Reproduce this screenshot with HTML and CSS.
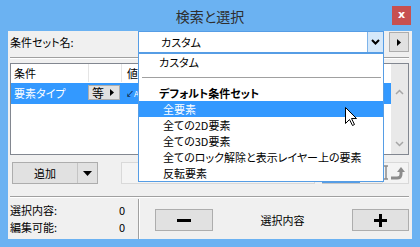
FILE: index.html
```html
<!DOCTYPE html>
<html>
<head>
<meta charset="utf-8">
<link rel="stylesheet" href="styles.css">
</head>
<body>

<!-- title bar -->
<div class="titlebar">
  <span></span>
  <div class="title">検索と選択</div>
  <div class="close">x</div>
</div>

<div class="client">

  <!-- condition set row -->
  <div class="setrow">
    <div class="setlabel">条件セット名:</div>
    <div class="combo">
      <div class="combotext">カスタム</div>
      <div class="combobtn">
        <svg width="9" height="6" viewBox="0 0 9 6"><path d="M1 1l3.5 3.5L8 1" stroke="#000" stroke-width="2" fill="none"/></svg>
      </div>
    </div>
    <div class="smallbtn">
      <svg width="4" height="7" viewBox="0 0 4 7"><path d="M0 0l4 3.5L0 7z" fill="#000"/></svg>
    </div>
  </div>

  <div class="sep"></div>

  <!-- condition list -->
  <div class="listbox">
    <div class="lbmain">
      <div class="lbhead">
        <span class="c1">条件</span>
        <span class="c2"></span>
        <span class="c3">値</span>
      </div>
      <div class="lbrow">
        <span class="c1">要素タイプ</span>
        <span class="c2"><span class="opbtn">等<svg width="4" height="7" viewBox="0 0 4 7"><path d="M0 0l4 3.5L0 7z" fill="#000"/></svg></span></span>
        <span class="c3"><span class="tiny">↙</span><span class="tinya">A</span></span>
      </div>
    </div>
    <div class="vscroll">
      <svg width="9" height="6" viewBox="0 0 9 6"><path d="M1 5l3.5-3.5L8 5" stroke="#a6a6a6" stroke-width="1.5" fill="none"/></svg>
      <svg width="9" height="6" viewBox="0 0 9 6"><path d="M1 1l3.5 3.5L8 1" stroke="#a6a6a6" stroke-width="1.5" fill="none"/></svg>
    </div>
  </div>

  <!-- buttons under the list -->
  <div class="btnrow">
    <div class="addbtn">
      <div class="addlabel">追加</div>
      <div class="addarrow"><svg width="9" height="5" viewBox="0 0 9 5"><path d="M0 0h9L4.5 5z" fill="#000"/></svg></div>
    </div>
    <div class="disbtn"></div>
    <div class="focusbtn"><div class="focusfill"></div></div>
    <div class="redobtn">
      <svg width="24" height="18" viewBox="0 0 24 18">
        <path d="M0 2h4M2 2v13M0 15h4" stroke="#8c8c8c" stroke-width="1.5" fill="none"/>
        <path d="M7 14h6q4 0 4-4v-2" stroke="#8c8c8c" stroke-width="3" fill="none"/>
        <path d="M13 8l4-5 4 5z" fill="#8c8c8c"/>
      </svg>
    </div>
  </div>

  <div class="sep sep2"></div>

  <!-- selection summary -->
  <div class="bottom">
    <div class="stats">
      <div class="statrow"><span>選択内容:</span><span>0</span></div>
      <div class="statrow"><span>編集可能:</span><span>0</span></div>
    </div>
    <div class="vsep"></div>
    <div class="selarea">
      <div class="selbtn minus"><span class="bar"></span></div>
      <div class="sellabel">選択内容</div>
      <div class="selbtn plus">
        <svg width="13" height="13" viewBox="0 0 13 13"><path d="M0 6.5h13M6.5 0v13" stroke="#000" stroke-width="3"/></svg>
      </div>
    </div>
  </div>

  <!-- open dropdown of the combo box -->
  <div class="popup">
    <div class="pitem">カスタム</div>
    <div class="psep"><span></span></div>
    <div class="pitem phead">デフォルト条件セット</div>
    <div class="pitem sub hot">全要素</div>
    <div class="pitem sub">全ての2D要素</div>
    <div class="pitem sub">全ての3D要素</div>
    <div class="pitem sub">全てのロック解除と表示レイヤー上の要素</div>
    <div class="pitem sub">反転要素</div>
  </div>
</div>

<!-- mouse pointer -->
<svg class="cursor" width="13" height="20" viewBox="0 0 13 20">
  <path d="M0.5 0.5V16.5L4.5 12.5L7.5 18.5L9.5 17.5L6.5 11.5H11.5Z" fill="#fff" stroke="#000" stroke-width="1"/>
</svg>

</body>
</html>
```

FILE: styles.css
```css
body {
  margin: 0;
  width: 420px;
  height: 247px;
  overflow: hidden;
  background: #6bb2f2;
  font-family: "Noto Sans CJK JP", "Noto Sans", sans-serif;
  font-size: 11px;
  font-feature-settings: "palt";
  color: #000;
}

/* title bar */
.titlebar {
  height: 31px;
  display: grid;
  grid-template-columns: 1fr auto 1fr;
  align-items: start;
}

.title {
  font-size: 14px;
  line-height: 33px;
  color: #2e2e2e;
}

.close {
  justify-self: end;
  margin: 6px 9px 0 0;
  width: 19px;
  height: 19px;
  background: #c75050;
  color: #fff;
  font: bold 11px "DejaVu Sans", sans-serif;
  text-align: center;
  line-height: 18px;
}

/* window body */
.client {
  position: relative;
  margin: 0 8px;
  height: 208px;
  padding: 0 3px 0 2px;
  background: #f0f0f0;
}

.setrow {
  display: flex;
  height: 22px;
}

.setlabel {
  width: 128px;
  line-height: 22px;
}

.combo {
  width: 246px;
  height: 22px;
  box-sizing: border-box;
  border: 1px solid #569de5;
  background: #fff;
  display: flex;
}

.combotext {
  flex: 1;
  padding-left: 22px;
  line-height: 20px;
}

.combobtn {
  width: 15px;
  border-left: 1px solid #7eb4ea;
  background: #d5e8fa;
  display: flex;
  align-items: center;
  justify-content: center;
}

.smallbtn {
  margin: 1px 0 0 5px;
  width: 20px;
  height: 20px;
  box-sizing: border-box;
  border: 1px solid #adadad;
  background: #e1e1e1;
  display: flex;
  align-items: center;
  justify-content: center;
}

.sep {
  margin-top: 4px;
  border-top: 1px solid #a0a0a0;
  border-bottom: 1px solid #fff;
}

/* list of conditions */
.listbox {
  margin-top: 4px;
  height: 92px;
  box-sizing: border-box;
  border: 1px solid #828790;
  background: #fff;
  display: flex;
}

.lbmain {
  flex: 1;
}

.lbhead, .lbrow {
  display: grid;
  grid-template-columns: 77px 34px 1fr;
}

.lbhead {
  height: 18px;
  line-height: 18px;
  border-bottom: 1px solid #fff;
}

.lbhead .c2 {
  border-left: 1px solid #e5e5e5;
  border-right: 1px solid #e5e5e5;
}

.c1 {
  padding-left: 3px;
}

.lbhead .c3 {
  padding-left: 5px;
}

.lbrow {
  height: 21px;
  line-height: 21px;
  background: #3399ff;
  color: #fff;
}

.opbtn {
  margin-top: 2px;
  width: 32px;
  height: 15px;
  box-sizing: border-box;
  border: 1px solid #adadad;
  background: #e1e1e1;
  color: #000;
  display: flex;
  align-items: center;
  gap: 6px;
  padding-left: 3px;
  font-size: 12px;
  line-height: 13px;
}

.lbrow .c3 {
  padding-left: 4px;
  font-size: 8px;
}

.tiny {
  color: #000;
}

.tinya {
  color: #fff;
}

.vscroll {
  width: 17px;
  background: #e9e9e9;
  display: flex;
  flex-direction: column;
  align-items: center;
  justify-content: space-between;
  padding: 25px 0 7px;
  box-sizing: border-box;
}

/* buttons below the list */
.btnrow {
  display: flex;
  margin-top: 7px;
  height: 22px;
}

.addbtn {
  margin-left: 2px;
  width: 86px;
  box-sizing: border-box;
  border: 1px solid #adadad;
  background: #e1e1e1;
  display: flex;
}

.addlabel {
  width: 64px;
  text-align: center;
  line-height: 20px;
  border-right: 1px solid #c4c4c4;
}

.addarrow {
  flex: 1;
  display: flex;
  align-items: center;
  justify-content: center;
}

.disbtn {
  margin-left: 23px;
  width: 194px;
  box-sizing: border-box;
  border: 1px solid #d9d9d9;
  background: #f4f4f4;
}

.focusbtn {
  margin-left: 7px;
  width: 60px;
  box-sizing: border-box;
  border-bottom: 1px solid #c8c8c8;
}

.focusfill {
  width: 38px;
  height: 100%;
  background: #569de5;
}

.redobtn {
  width: 27px;
  box-sizing: border-box;
  border: 1px solid #d9d9d9;
  background: #f4f4f4;
  display: flex;
  align-items: center;
  padding-left: 1px;
}

.sep2 {
  margin-top: 12px;
}

/* selection summary */
.bottom {
  display: flex;
  height: 41px;
}

.stats {
  width: 128px;
  padding-top: 4px;
}

.statrow {
  display: flex;
  justify-content: space-between;
  height: 17px;
  line-height: 17px;
  padding-right: 13px;
}

.vsep {
  margin-top: 1px;
  border-left: 1px solid #a0a0a0;
  border-right: 1px solid #fff;
}

.selarea {
  flex: 1;
  display: flex;
  align-items: flex-start;
  padding-top: 11px;
}

.selbtn {
  height: 22px;
  box-sizing: border-box;
  border: 1px solid #adadad;
  background: #e1e1e1;
  display: flex;
  align-items: center;
  justify-content: center;
}

.minus {
  margin-left: 15px;
  width: 58px;
}

.bar {
  width: 14px;
  height: 3px;
  background: #000;
}

.plus {
  width: 57px;
}

.sellabel {
  flex: 1;
  text-align: center;
  line-height: 22px;
}

/* dropdown list */
.popup {
  position: absolute;
  left: 130px;
  top: 22px;
  width: 246px;
  height: 129px;
  box-sizing: border-box;
  border: 1px solid #569de5;
  background: #fff;
}

.pitem {
  height: 16px;
  line-height: 16px;
  padding-left: 20px;
  white-space: nowrap;
}

.phead {
  font-weight: bold;
}

.sub {
  padding-left: 24px;
}

.hot {
  background: #3399ff;
  color: #fff;
}

.psep {
  height: 15px;
  display: flex;
  align-items: center;
  padding: 0 2px 0 3px;
}

.psep span {
  flex: 1;
  border-top: 1px solid #a0a0a0;
}

.cursor {
  position: absolute;
  left: 345px;
  top: 107px;
}
```
